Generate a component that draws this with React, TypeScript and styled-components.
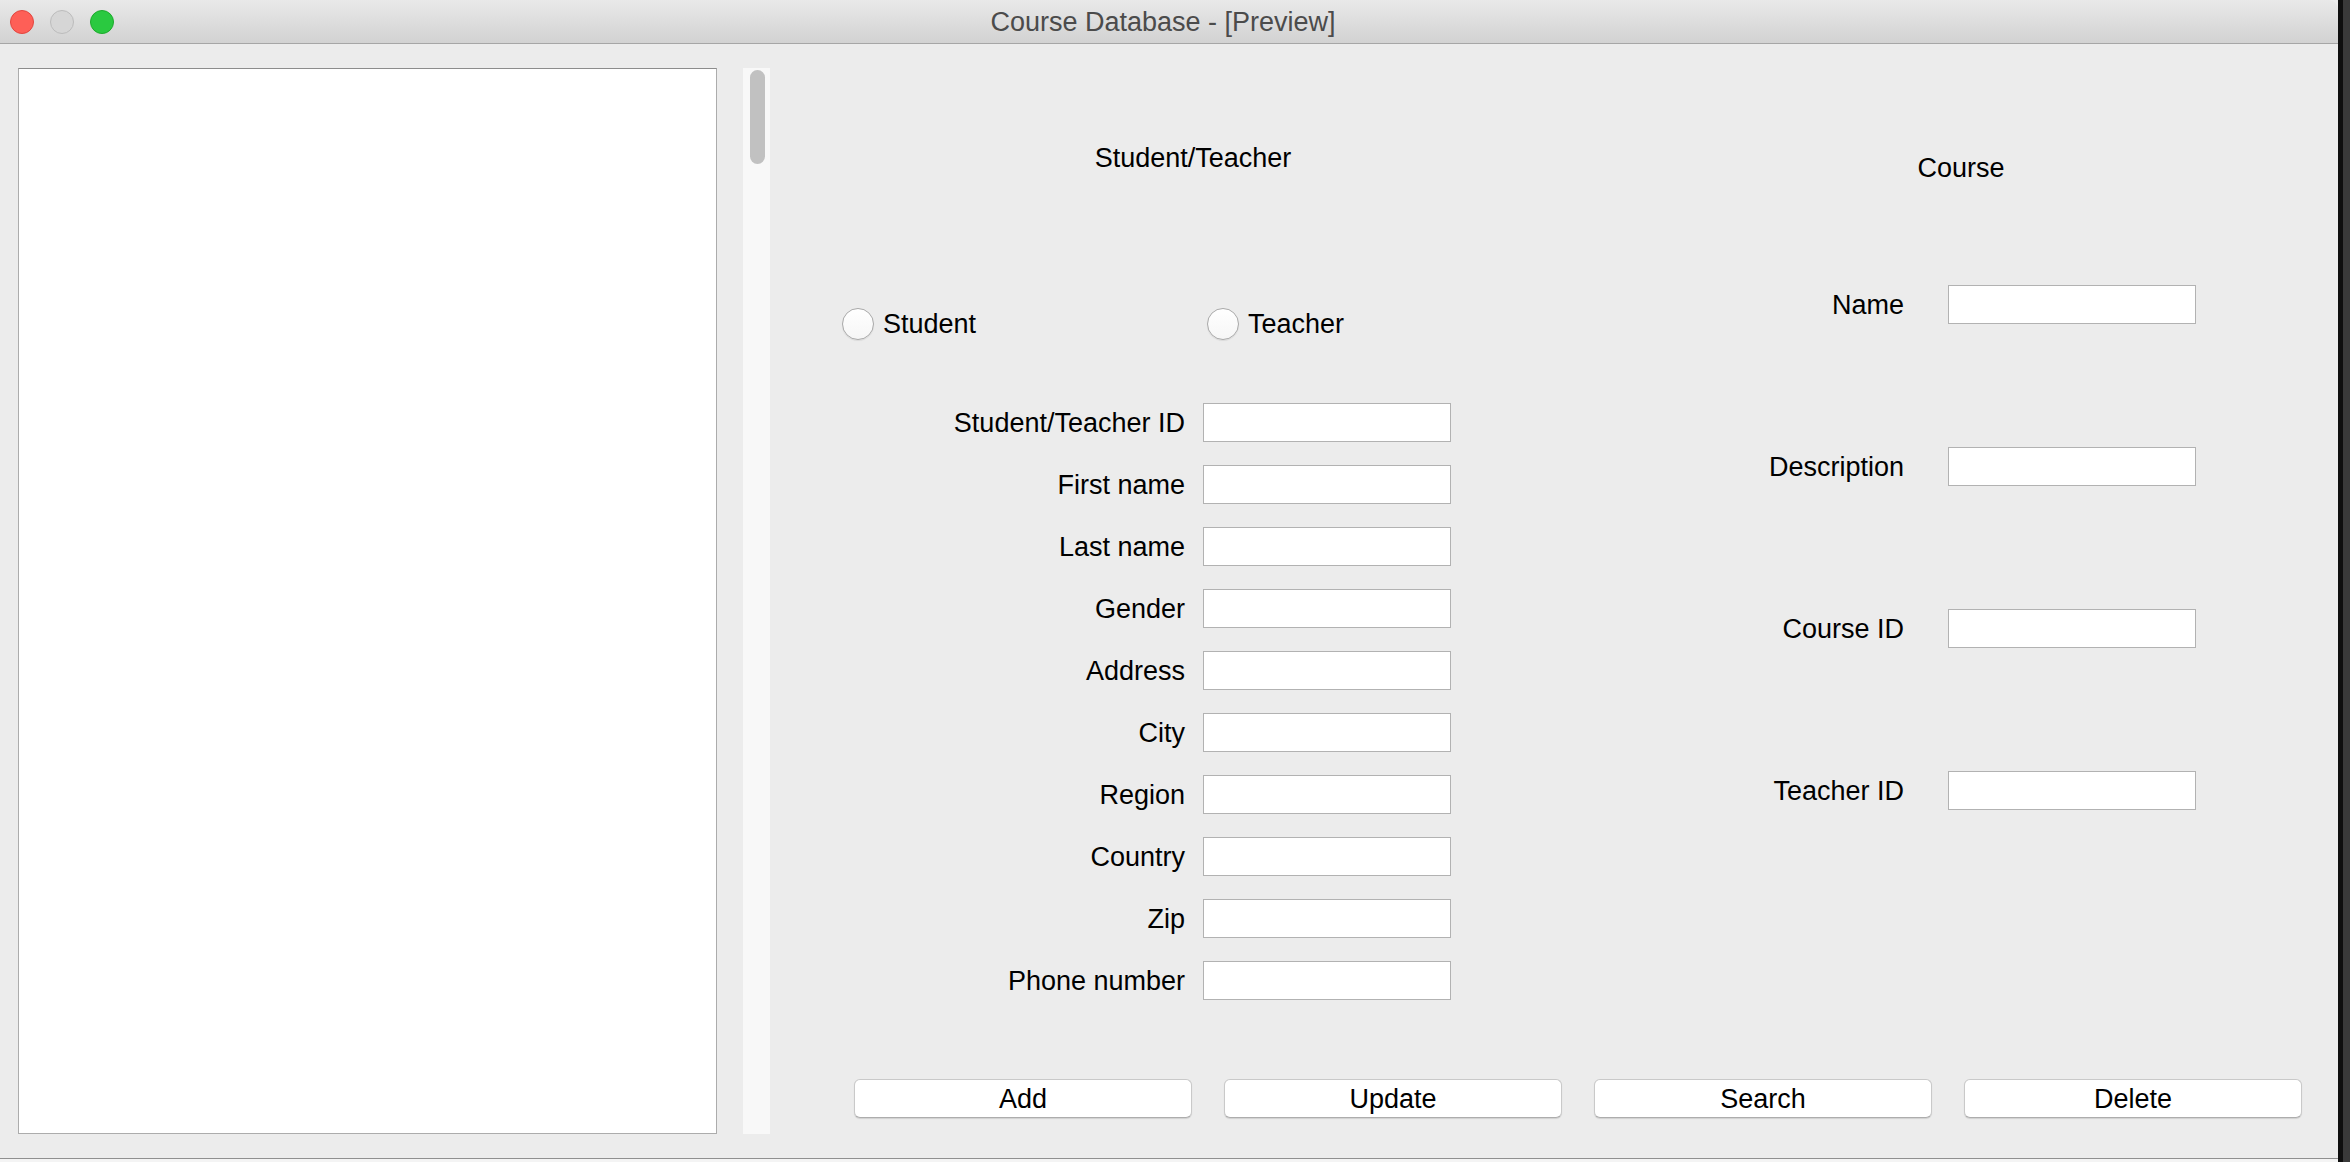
import React from 'react';
import styled, { createGlobalStyle } from 'styled-components';

const GlobalStyle = createGlobalStyle`
  html, body {
    margin: 0;
    padding: 0;
    overflow: hidden;
    background: #2e2e2e;
  }
  * {
    box-sizing: border-box;
  }
`;

const Desktop = styled.div`
  display: flex;
  width: 2350px;
  height: 1162px;
  font-family: 'Liberation Sans', Arial, sans-serif;
`;

const Window = styled.div`
  display: flex;
  flex-direction: column;
  width: 2338px;
  height: 100%;
  background: #ececec;
`;

const TitleBar = styled.div`
  display: grid;
  grid-template-columns: 1fr auto 1fr;
  align-items: center;
  height: 44px;
  flex-shrink: 0;
  padding-left: 10px;
  background: linear-gradient(to bottom, #e9e9e9, #d2d2d2);
  border-bottom: 1px solid #a6a6a6;
  border-top-right-radius: 9px;
`;

const TrafficLights = styled.div`
  display: flex;
  gap: 16px;
`;

interface LightProps {
  $fill: string;
  $edge: string;
}

const Light = styled.span<LightProps>`
  width: 24px;
  height: 24px;
  border-radius: 50%;
  background: ${(p) => p.$fill};
  border: 1px solid ${(p) => p.$edge};
`;

const WindowTitle = styled.div`
  font-size: 27px;
  color: #4b4b4b;
  white-space: nowrap;
  margin-right: 22px;
  padding-top: 2px;
`;

const Body = styled.div`
  flex: 1;
  display: flex;
  align-items: stretch;
  padding: 24px 0 24px 18px;
  border-bottom: 1px solid #8f8f8f;
`;

const ListPanel = styled.div`
  width: 699px;
  flex-shrink: 0;
  background: #fff;
  border: 1px solid #acacac;
  border-top-color: #8c8c8c;
`;

const ScrollTrack = styled.div`
  width: 27px;
  flex-shrink: 0;
  margin-left: 26px;
  padding: 2px 0 0 7px;
  background: #f8f8f8;
`;

const ScrollThumb = styled.div`
  width: 15px;
  height: 94px;
  border-radius: 8px;
  background: #c1c1c1;
`;

const FormArea = styled.div`
  flex: 1;
  display: flex;
  flex-direction: column;
  color: #000;
  font-size: 27px;
`;

const TopRow = styled.div`
  display: flex;
  padding-left: 72px;
`;

interface SectionProps {
  $width: number;
  $offset?: number;
}

const Section = styled.section<SectionProps>`
  display: flex;
  flex-direction: column;
  width: ${(p) => p.$width}px;
  margin-left: ${(p) => p.$offset ?? 0}px;
`;

interface GapProps {
  $top: number;
}

const SectionHeading = styled.div<GapProps>`
  margin-top: ${(p) => p.$top}px;
  line-height: 32px;
  text-align: center;
`;

const RadioRow = styled.div<GapProps>`
  display: grid;
  grid-template-columns: 365px auto;
  margin-top: ${(p) => p.$top}px;
`;

const RadioOption = styled.label`
  display: flex;
  align-items: center;
  gap: 9px;
  height: 32px;
`;

const RadioCircle = styled.span`
  width: 32px;
  height: 32px;
  border-radius: 50%;
  background: linear-gradient(to bottom, #ffffff, #f6f6f6);
  border: 1px solid #a9a9a9;
  box-shadow: 0 1px 1px rgba(0, 0, 0, 0.08);
`;

interface GridProps extends GapProps {
  $label: number;
  $colGap: number;
  $rowGap: number;
}

const FieldGrid = styled.div<GridProps>`
  display: grid;
  grid-template-columns: ${(p) => p.$label}px 248px;
  grid-auto-rows: 39px;
  column-gap: ${(p) => p.$colGap}px;
  row-gap: ${(p) => p.$rowGap}px;
  align-items: center;
  margin-top: ${(p) => p.$top}px;
`;

const FieldLabel = styled.span`
  text-align: right;
  white-space: nowrap;
  padding-top: 2px;
`;

const TextField = styled.div`
  height: 39px;
  background: #fff;
  border: 1px solid #b2b2b2;
`;

const ButtonRow = styled.div`
  display: grid;
  grid-template-columns: repeat(4, 338px);
  column-gap: 32px;
  margin-top: auto;
  padding: 0 0 16px 84px;
`;

const ActionButton = styled.button`
  height: 39px;
  background: #fff;
  border: 1px solid #c9c9c9;
  border-bottom-color: #adadad;
  border-radius: 6px;
  box-shadow: 0 1px 1px rgba(0, 0, 0, 0.12);
  font-family: 'Liberation Sans', Arial, sans-serif;
  font-size: 27px;
  color: #000;
  padding: 2px 0 0;
`;

const WindowFooter = styled.div`
  height: 3px;
  flex-shrink: 0;
  background: #f4f4f4;
`;

const DesktopEdge = styled.div`
  flex: 1;
  background: linear-gradient(to right, #0f0f0f 0 5px, #3a3a3a 5px);
`;

const personFields = [
  'Student/Teacher ID',
  'First name',
  'Last name',
  'Gender',
  'Address',
  'City',
  'Region',
  'Country',
  'Zip',
  'Phone number',
];

const courseFields = ['Name', 'Description', 'Course ID', 'Teacher ID'];

const actions = ['Add', 'Update', 'Search', 'Delete'];

const App = () => {
  return (
    <>
      <GlobalStyle />
      <Desktop>
        <Window>
          <TitleBar>
            <TrafficLights>
              <Light $fill="#fe5f57" $edge="#e2463f" />
              <Light $fill="#d6d6d6" $edge="#bcbcbc" />
              <Light $fill="#2ac940" $edge="#1daa2c" />
            </TrafficLights>
            <WindowTitle>Course Database - [Preview]</WindowTitle>
            <span />
          </TitleBar>
          <Body>
            <ListPanel />
            <ScrollTrack>
              <ScrollThumb />
            </ScrollTrack>
            <FormArea>
              <TopRow>
                <Section $width={702}>
                  <SectionHeading $top={74}>Student/Teacher</SectionHeading>
                  <RadioRow $top={134}>
                    <RadioOption>
                      <RadioCircle />
                      Student
                    </RadioOption>
                    <RadioOption>
                      <RadioCircle />
                      Teacher
                    </RadioOption>
                  </RadioRow>
                  <FieldGrid $top={63} $label={343} $colGap={18} $rowGap={23}>
                    {personFields.map((f) => (
                      <React.Fragment key={f}>
                        <FieldLabel>{f}</FieldLabel>
                        <TextField />
                      </React.Fragment>
                    ))}
                  </FieldGrid>
                </Section>
                <Section $width={482} $offset={176}>
                  <SectionHeading $top={84}>Course</SectionHeading>
                  <FieldGrid $top={101} $label={184} $colGap={44} $rowGap={123}>
                    {courseFields.map((f) => (
                      <React.Fragment key={f}>
                        <FieldLabel>{f}</FieldLabel>
                        <TextField />
                      </React.Fragment>
                    ))}
                  </FieldGrid>
                </Section>
              </TopRow>
              <ButtonRow>
                {actions.map((a) => (
                  <ActionButton key={a}>{a}</ActionButton>
                ))}
              </ButtonRow>
            </FormArea>
          </Body>
          <WindowFooter />
        </Window>
        <DesktopEdge />
      </Desktop>
    </>
  );
};

export default App;
